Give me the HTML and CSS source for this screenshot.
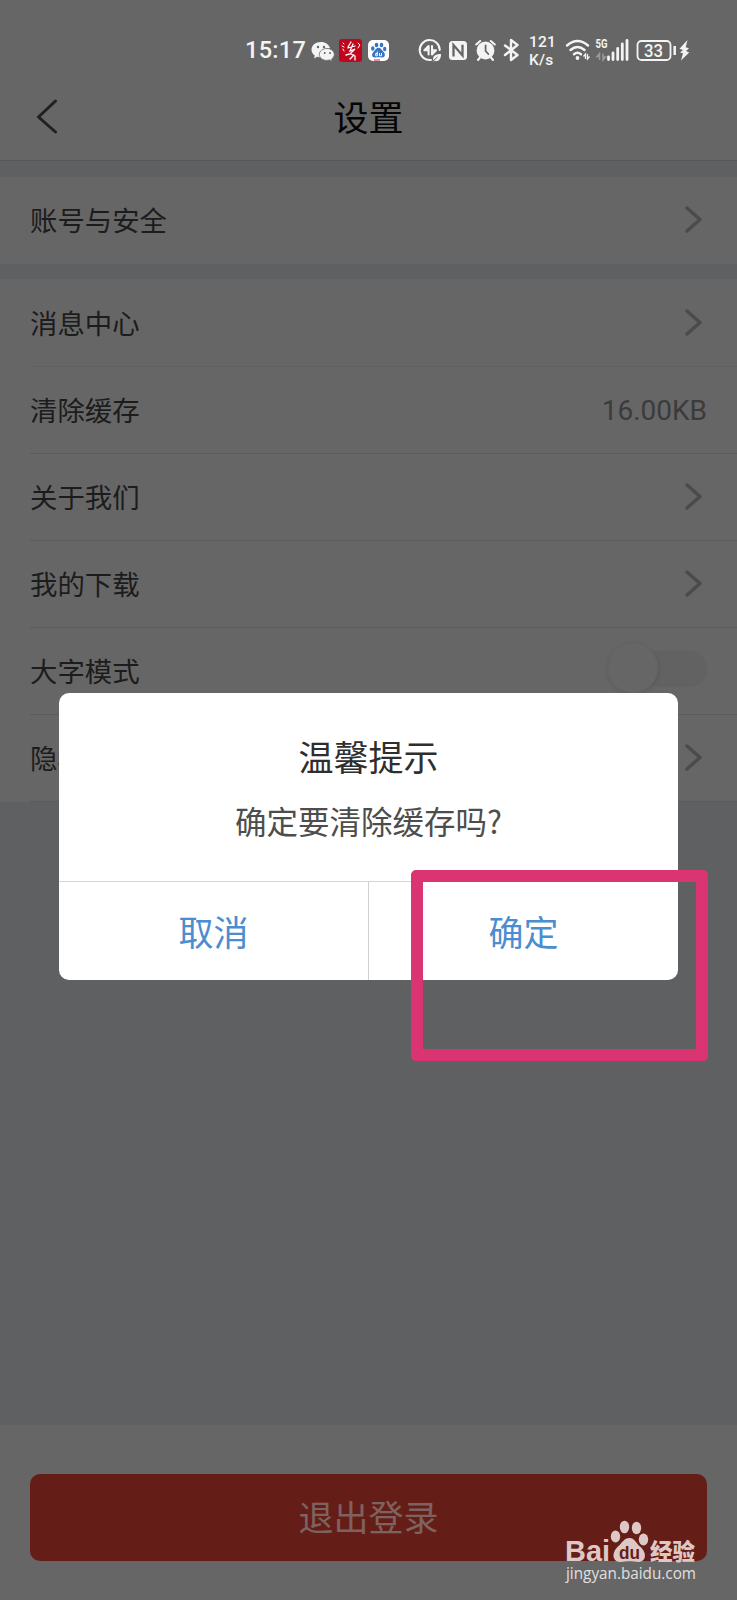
FILE: index.html
```html
<!DOCTYPE html>
<html lang="zh-CN">
<head>
<meta charset="utf-8">
<title>设置</title>
<link rel="stylesheet" href="styles.css">
</head>
<body>
<div class="screen">
  <div class="status">
    <span class="time">15:17</span>
    <svg class="status-left" width="220" height="50" viewBox="305 25 220 50">
      <g fill="#f4f4f4">
        <path d="M321 42c-5.600 0-9.500 3.400-9.500 7.700 0 2.500 1.300 4.500 3.300 5.900l-.8 2.800 3.200-1.600 3.400.6c-.9-5.500 3-9.200 9.500-9.100-1-3.800-4.600-6.300-9.100-6.300z"/>
        <path d="M327 48.500c-4.500 0-7.700 2.700-7.700 5.900 0 3.400 3.400 6 7.700 6l2.700-.5 2.500 1.500-.6-2.400c1.700-1.200 2.700-2.800 2.700-4.600 0-3.200-3.200-5.900-7.300-5.900z" stroke="#666" stroke-width=".8"/>
      </g>
      <g fill="#666"><circle cx="318" cy="47" r="1.200"/><circle cx="324" cy="47" r="1.200"/><circle cx="324.700" cy="53" r="1"/><circle cx="330" cy="53" r="1"/></g>
      <rect x="339" y="39" width="23" height="23" rx="3" fill="#c0061c"/>
      <g fill="none" stroke="#fff" stroke-width="1.300" stroke-linecap="round">
        <path d="M351 42l-3 5M348 48l7-2M353 44l-3 7 5-2-5 5-4 1M351 54l2 1M350 59l4-4M355 56v4"/>
        <path d="M343 43l1 1M342 46l2 1M343 49l1 2M358 43l2 2-2 3" stroke-width="1"/>
      </g>
      <rect x="368" y="40" width="21" height="21" rx="5" fill="#fff"/>
      <g fill="#3775c4">
        <ellipse cx="372.800" cy="48.500" rx="1.700" ry="2.200"/><ellipse cx="376.500" cy="45" rx="1.800" ry="2.300"/><ellipse cx="381.500" cy="45" rx="1.800" ry="2.300"/><ellipse cx="384.700" cy="49" rx="1.700" ry="2.200"/>
        <path d="M378.600 47.800c2.300 0 2.700 2 4.500 3.600 3 2.700 2 6-1 6-2.500 0-4-.3-6.500 0-4 .4-4.600-3.400-1.700-6 1.700-1.600 2.400-3.600 4.700-3.600z"/>
      </g>
      <path d="M377.300 51.500v4.300h-1.600v-2.300h1.600M379.500 53v2.800h2V53" fill="none" stroke="#fff" stroke-width="1"/>
      <path d="M374 60h6" stroke="#d7465c" stroke-width="1.200"/>
      <g fill="none" stroke="#f4f4f4" stroke-linecap="round" stroke-linejoin="round">
        <path d="M439.700 50A10 10 0 1 0 431 60" stroke-width="2"/>
        <path d="M428.600 54.500v-8.500l-4.200 4.300h4M432 46v8.500l4-4.200h-3.500" stroke-width="2.100"/>
      </g>
      <path d="M433.200 60c-.8-4 2.500-6 7.800-6 .3 5-2.800 8.500-6.700 6.700l-1.500 1.300M434 60.500l4-4" fill="#f4f4f4" stroke="none"/>
      <path d="M432.500 61.500l5-4.500" stroke="#666" stroke-width="1"/>
      <rect x="449" y="41" width="18" height="19" rx="3.500" fill="#f4f4f4"/>
      <path d="M453.500 56.500V45l9 10.500V44.800" fill="none" stroke="#666" stroke-width="2.300"/>
      <circle cx="485.500" cy="50.500" r="8.900" fill="#f4f4f4"/>
      <path d="M476.200 44.500l4-3.500M494.800 44.500l-4-3.500M480 57.500l-2 2.500M491 57.500l2 2.500" stroke="#f4f4f4" stroke-width="2.100" stroke-linecap="round"/>
      <path d="M485.600 45.500v5.500l2.700 3" fill="none" stroke="#666" stroke-width="1.800" stroke-linecap="round"/>
      <path d="M505 45.500l12.500 9.500-6.500 5v-20l6.500 5-12.500 10" fill="none" stroke="#f4f4f4" stroke-width="2.400" stroke-linecap="round" stroke-linejoin="round"/>
    </svg>
    <span class="speed">121<br>K/s</span>
    <svg class="status-right" width="135" height="50" viewBox="560 25 135 50">
      <g fill="none" stroke="#f4f4f4" stroke-width="2.500" stroke-linecap="round">
        <path d="M567 45.500q10.500-9 21 0M570.500 50q7-6 14 0M574 54.200q3.500-2.800 7 0"/>
      </g>
      <circle cx="577.500" cy="58" r="1.900" fill="#f4f4f4"/>
      <path d="M585.500 59v-5l-2 2.500M587.500 54v5l2-2.500" fill="none" stroke="#f4f4f4" stroke-width="1.300"/>
      <text x="595.500" y="48.300" class="net" textLength="12" lengthAdjust="spacingAndGlyphs">5G</text>
      <path d="M599.500 60v-6.500l-2.500 3h2.500M603 53.500V60l2.500-3H603" fill="none" stroke="#999" stroke-width="1.500"/>
      <path d="M608.500 57v2.500M613 53v6.500M617.700 48.500v11M622.300 44v15.500M627 40.500v19" stroke="#f4f4f4" stroke-width="2.800" stroke-linecap="round"/>
      <rect x="637.500" y="41" width="33" height="19" rx="4" fill="none" stroke="#f4f4f4" stroke-width="1.800"/>
      <text x="644" y="57" class="charge" textLength="19" lengthAdjust="spacingAndGlyphs">33</text>
      <path d="M674.700 46v9" stroke="#f4f4f4" stroke-width="2.500"/>
      <path d="M687.500 40l-8 8.800 3.500 1.200-3 2.500 3 .8-2 7.200 8.200-8-3.200-1.500 3-2.700-3.300-1z" fill="#f4f4f4"/>
    </svg>
  </div>
  <header class="navbar">
    <svg class="back" width="22" height="36" viewBox="0 0 22 36"><path d="M19.500 2L2.500 18l17 15" fill="none" stroke="#202020" stroke-width="3" stroke-linecap="round" stroke-linejoin="round"/></svg>
    <h1 class="title">设置</h1>
  </header>
  <section class="group group-first">
    <div class="row"><span class="label">账号与安全</span><svg class="chev" width="17" height="27" viewBox="0 0 17 27"><path d="M2 2l13 11.500L2 25"/></svg></div>
  </section>
  <section class="group">
    <div class="row lined"><span class="label">消息中心</span><svg class="chev" width="17" height="27" viewBox="0 0 17 27"><path d="M2 2l13 11.500L2 25"/></svg></div>
    <div class="row lined"><span class="label">清除缓存</span><span class="size">16.00KB</span></div>
    <div class="row lined"><span class="label">关于我们</span><svg class="chev" width="17" height="27" viewBox="0 0 17 27"><path d="M2 2l13 11.500L2 25"/></svg></div>
    <div class="row lined"><span class="label">我的下载</span><svg class="chev" width="17" height="27" viewBox="0 0 17 27"><path d="M2 2l13 11.500L2 25"/></svg></div>
    <div class="row lined"><span class="label">大字模式</span><span class="switch"><span class="knob"></span></span></div>
    <div class="row lined"><span class="label">隐私</span><svg class="chev" width="17" height="27" viewBox="0 0 17 27"><path d="M2 2l13 11.500L2 25"/></svg></div>
  </section>
  <footer class="footer"><div class="logout">退出登录</div></footer>

  <div class="dialog">
    <div class="dialog-body">
      <div class="dialog-title">温馨提示</div>
      <div class="dialog-text">确定要清除缓存吗?</div>
    </div>
    <div class="actions">
      <div class="action">取消</div>
      <div class="action">确定</div>
    </div>
  </div>
  <div class="marker"></div>

  <svg class="watermark" width="140" height="75" viewBox="560 1515 140 75">
    <g fill="#ddc8c6">
      <text x="565" y="1561" class="wm-bai" textLength="45" lengthAdjust="spacingAndGlyphs">Bai</text>
      <ellipse cx="615.500" cy="1536.500" rx="4.700" ry="6"/>
      <ellipse cx="624.500" cy="1527" rx="4.700" ry="6.300"/>
      <ellipse cx="636.500" cy="1528" rx="4.700" ry="6.200"/>
      <ellipse cx="643.500" cy="1539.500" rx="4.700" ry="6"/>
      <path d="M629.500 1538c5 0 6.500 5 10.500 8.500 8 7 5.500 15.500-1.500 15.500-4 0-5-.7-9-.7s-5 .7-9 .7c-8 0-9.500-9-2.500-15.500 4-3.500 6-8.500 11.500-8.500z"/>
      <text x="650" y="1559.500" class="wm-cn" textLength="45" lengthAdjust="spacingAndGlyphs">经验</text>
    </g>
    <text x="619" y="1559" class="wm-du" textLength="21" lengthAdjust="spacingAndGlyphs">du</text>
    <text x="566" y="1578.500" class="wm-url" textLength="130" lengthAdjust="spacingAndGlyphs">jingyan.baidu.com</text>
  </svg>
</div>
</body>
</html>
```
FILE: styles.css
```css
* { box-sizing: border-box; }
body {
  margin: 0;
  background: #5f6062;
  font-family: "Noto Sans CJK SC", sans-serif;
}
.screen {
  position: relative;
  width: 737px;
  height: 1600px;
  overflow: hidden;
  display: flex;
  flex-direction: column;
  background: #5f6062;
}
.status {
  height: 75px;
  padding: 25px 0 0 245px;
  display: flex;
  align-items: center;
  background: #666;
  color: #f4f4f4;
}
.time {
  width: 60px;
  font: 500 23.500px/50px Roboto, sans-serif;
  letter-spacing: 0.3px;
  white-space: nowrap;
}
.status svg { flex: none; }
.speed {
  width: 35px;
  padding-left: 4px;
  font: 500 15.500px/18px Roboto, sans-serif;
  letter-spacing: 0.2px;
  padding-top: 1px;
}
.net { font: bold 12px Roboto, sans-serif; fill: #f4f4f4; }
.charge { font: 500 18px Roboto, sans-serif; fill: #f4f4f4; }
.navbar {
  height: 86px;
  display: flex;
  align-items: center;
  padding: 0 36px;
  background: #666;
  border-bottom: 1px solid #575859;
}
.back { flex: none; margin-top: -2px; }
.title {
  flex: 1;
  margin: -3px 22px 0 0;
  text-align: center;
  font-size: 35px;
  font-weight: 400;
  line-height: 50px;
  color: #050505;
}
.group { background: #666; }
.group-first { margin: 16px 0 15px; padding-bottom: 0; }
.row {
  height: 87px;
  margin-left: 30px;
  padding-right: 30px;
  display: flex;
  align-items: center;
  justify-content: space-between;
  font-size: 27.400px;
  line-height: 40px;
  color: #1c1c1c;
}
.group-first + .group { padding-top: 1px; }
.label { padding-bottom: 3px; }
.lined { border-bottom: 1px solid #5b5b5b; }
.lined:first-child { border-color: #606060; }
.chev {
  margin: -2px 5px 0 0;
  fill: none;
  stroke: #4b4b4b;
  stroke-width: 3.500;
  stroke-linecap: round;
  stroke-linejoin: round;
}
.size {
  padding-top: 1px;
  font-family: Roboto, sans-serif;
  font-size: 28px;
  color: #3b3b3b;
}
.switch {
  width: 98px;
  height: 36px;
  margin-top: -5px;
  border-radius: 18px;
  background: #626262;
}
.knob {
  display: block;
  width: 50px;
  height: 50px;
  margin: -8px 0 0 -1px;
  border-radius: 50%;
  background: #666;
  box-shadow: 0 1px 5px rgba(0, 0, 0, 0.12);
}
.footer {
  height: 175px;
  margin-top: auto;
  padding: 49px 30px 0;
  background: #666;
}
.logout {
  height: 87px;
  border-radius: 10px;
  background: #651e17;
  color: #7e625f;
  font-size: 35px;
  line-height: 84px;
  text-align: center;
}
.dialog {
  position: absolute;
  left: 59px;
  top: 693px;
  width: 619px;
  height: 287px;
  display: flex;
  flex-direction: column;
  border-radius: 10px;
  background: #fff;
  overflow: hidden;
  text-align: center;
}
.dialog-body { flex: none; height: 188px; padding-top: 38px; }
.dialog-title { font-size: 35px; line-height: 50px; color: #2e2e2e; }
.dialog-text { margin-top: 16px; font-size: 31.500px; line-height: 46px; color: #4d4d4d; }
.actions { flex: 1; display: flex; border-top: 1px solid #d6d6d6; }
.action { flex: 1; font-size: 35px; line-height: 98px; color: #4b8dcf; }
.action + .action { border-left: 1px solid #d0d0d0; }
.marker {
  position: absolute;
  left: 411px;
  top: 869.500px;
  width: 296.500px;
  height: 191px;
  border: 12px solid #db3472;
  border-radius: 5px;
}
.watermark { position: absolute; left: 560px; top: 1515px; }
.wm-bai { font: bold 29px "Liberation Sans", sans-serif; }
.wm-cn { font: 900 23px "Noto Sans CJK SC", sans-serif; }
.wm-du { font: bold 19px "Liberation Sans", sans-serif; fill: #651e17; }
.wm-url { font: 500 15.500px "Open Sans", sans-serif; fill: #e0e0e0; }
```
